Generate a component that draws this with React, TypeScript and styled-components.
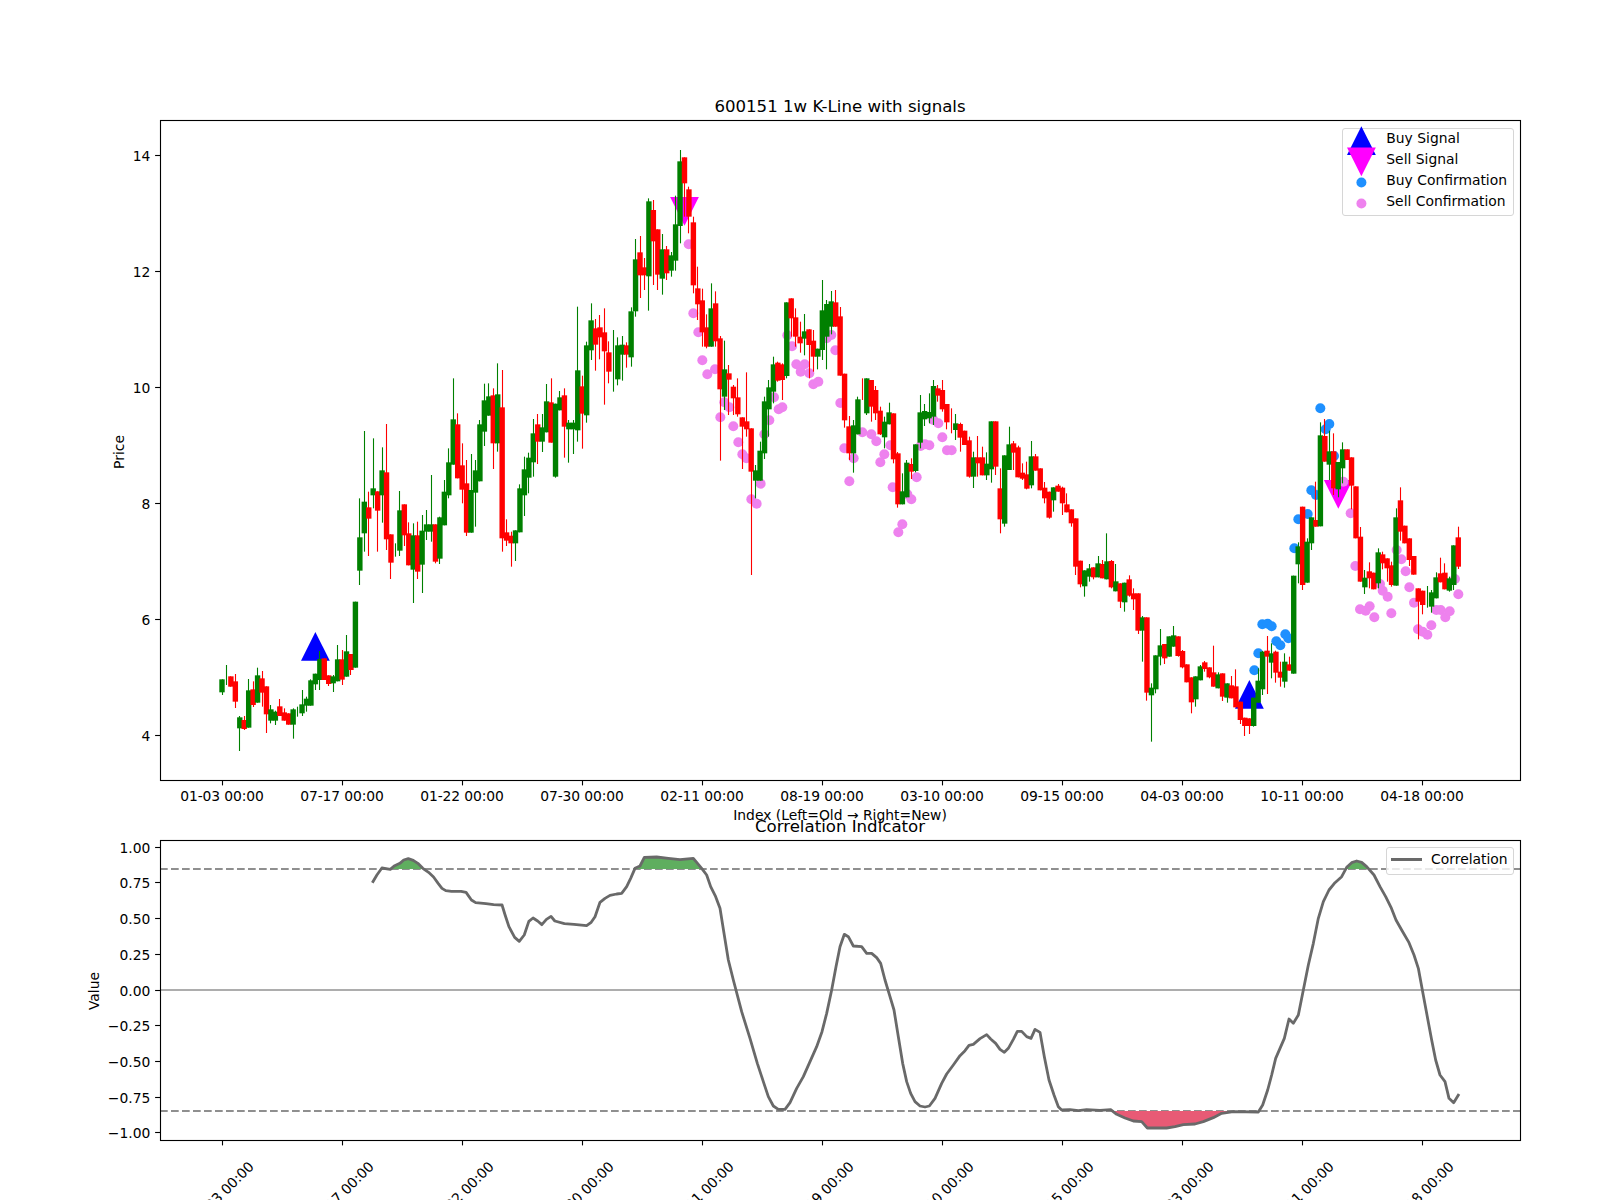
import React from "react";
import styled, { createGlobalStyle } from "styled-components";

const FONT = `"DejaVu Sans", "Liberation Sans", sans-serif`;
const CX0 = 222;
const CDX = 4.447;

// candle rows: colour, body top, body bottom, wick top, wick bottom (read from crops, with a y base)
const SEGMENTS: [number, string][] = [
  [480, `G 598 637 598 645,G 601 601 555 615,R 589 620 589 620,R 604 665 582 684,G 712 745 708 813,R 720 747 708 750,G 631 743 597 743,R 628 675 604 681,G 586 668 563 668,R 595 638 573 680,R 619 703 619 759,G 688 722 675 730,G 695 722 692 735,R 679 708 657 708,R 697 722 685 722,R 700 734 700 734,G 688 734 685 776,G 695 695 680 710,G 673 700 630 708,G 656 677 650 695,G 601 677 598 677,G 581 613 581 630,G 537 600 513 630,R 535 600 535 600,R 586 612 586 618,G 589 610 585 636,G 538 604 495 604,R 538 599 510 615,G 514 590 465 590,R 522 570 522 585,G 365 563 365 563`],
  [230, `G 922 1022 805 1065,G 815 910 603 965,R 832 866 785 978,G 775 796 625 835,R 784 842 784 965,G 721 796 652 878,R 727 928 582 960,R 913 998 913 1047,G 960 960 940 980,G 841 962 783 978,R 823 916 823 948,R 910 1006 877 1006,G 916 1019 880 1119,R 916 1025 875 1047,G 902 1004 855 1089,G 883 905 840 930,G 883 905 735 935,R 883 995 883 1000,G 862 986 860 1002,G 785 886 750 886,G 697 796 655 805,G 568 704 445 704,R 583 745 550 745,R 706 779 640 820,R 760 908 690 918,G 780 908 672 908,G 721 788 690 890,G 583 754 570 754,G 511 605 461 648,G 499 557 460 557,R 496 640 475 717,G 493 640 400 665,R 532 925 420 965,R 907 932 868 948,R 917 940 905 1010,G 901 940 901 993,G 775 907 763 907,G 718 796 680 858,G 683 743 668 790,G 610 697 567 740,R 583 635 552 702,G 592 635 552 666,G 514 607 462 607,R 517 638 445 638,G 521 740 521 743,G 502 541 483 541,R 496 590 475 683,G 578 598 570 698,G 578 598 570 672`],
  [130, `G 721 901 530 935,R 769 851 737 956,G 646 856 635 878,G 571 661 520 690,R 595 644 567 722,R 592 622 555 688,R 607 664 535 824,R 667 725 634 760,G 700 700 600 785,G 646 748 622 766,G 644 674 618 752,R 646 674 637 713,G 544 682 532 710,G 388 544 327 560,R 367 436 318 504,R 412 436 384 480,G 214 439 205 542,R 240 334 210 465,R 298 434 298 480,G 358 446 312 494,R 358 430 348 450,G 376 422 366 440,G 283 392 197 422,G 94 288 60 340,R 82 160 82 260,R 178 260 170 310,R 277 466 260 490,R 475 523 410 570,R 511 607 476 650,R 592 650 553 655,G 535 650 460 650,R 520 634 484 650,R 625 778 618 992,G 718 800 632 840,R 730 749 705 855,R 770 805 765 855,R 802 853 745 860,R 862 890 862 1017,R 874 898 727 920,R 895 1025 895 1335,G 1021 1052 1005 1105,G 962 1052 935 1052,G 814 970 800 987,G 772 838 750 920,G 703 785 680 820,R 698 752 695 755,R 703 750 700 810,G 517 738 517 745,R 505 565 505 620,R 562 620 535 650,R 620 640 575 668,G 604 626 552 676,R 598 645 598 745,R 632 680 600 725,G 656 680 656 718,G 541 660 450 690,G 522 620 510 718,G 514 590 483 613,R 517 590 480 590,R 559 737 531 737,R 731 871 731 893`],
  [380, `R 139 220 108 240,G 136 220 120 278,G 58 163 50 163,R 30 30 -5 60,G -5 100 -5 105,R 0 80 0 125,R 30 100 18 120,R 92 163 80 165,G 125 172 110 205,G 97 133 68 133,R 100 238 100 250,R 220 373 216 383,G 334 373 280 373,G 248 352 240 352,R 252 275 235 297,G 193 273 193 277,G 97 188 45 205,G 93 118 72 138,G 96 115 40 130,G 18 110 0 135,R 25 47 15 65,R 30 88 0 95,R 72 127 72 148,R 120 120 85 160,G 130 150 102 180,R 132 173 128 215,R 152 195 152 195,R 181 290 170 293,G 232 290 215 324,R 232 250 168 290,R 232 286 200 286,G 251 286 217 300,G 124 268 124 308,R 124 260 124 285,R 325 418 265 460,G 226 431 226 440,G 193 270 140 270,R 190 218 183 270,R 202 292 197 292,R 278 296 250 300,R 283 326 245 328,G 229 316 183 325,R 229 272 222 272,R 265 331 265 331,R 323 355 306 370,R 335 413 335 416,G 322 361 322 395,R 317 335 312 335,R 323 370 320 405,R 373 397 340 397,R 388 430 388 440,R 415 560 415 585,R 542 613 542 622,G 571 619 571 650,G 565 590 552 605,R 562 592 562 598,G 550 592 528 592,R 552 595 540 595,G 544 598 460 598,R 543 622 540 625,G 604 634 552 634,R 610 665 610 684,G 608 667 608 695,R 598 647 586 650,R 640 658 625 690,R 640 752 640 762,G 712 752 708 845,R 712 938 712 962,G 923 946 910 1085,G 826 928 826 940,G 796 830 747 856,R 792 835 792 852,G 769 830 769 830,G 766 800 738 800,R 769 828 769 830,R 813 862 810 865,R 853 907 853 907,R 892 967 892 1000,G 889 958 889 980,G 859 901 855 901,R 847 867 843 875,R 862 892 862 895,R 877 920 797 920,G 883 925 877 925,R 880 950 880 963,G 910 953 910 968,R 916 955 888 955,R 919 982 868 982,R 965 1020 965 1032,R 1013 1038 1013 1068,R 1015 1038 1015 1062,G 953 1038 953 1040,G 902 968 865 968,G 815 928 813 945,R 812 830 768 942,G 820 848 790 895,R 815 878 812 908,R 875 893 845 920,G 845 905 820 923,R 853 872 830 872,G 587 881 587 881,G 499 553 487 610,R 380 615 380 630,G 485 608 475 608,G 412 490 412 510,R 420 440 305 440,G 166 439 127 439,R 168 245 117 245,G 214 254 152 300,R 214 325 160 345,G 246 328 246 352,G 208 265 187 310,R 208 240 208 240,R 232 317 232 388,R 319 475 319 475,R 470 605 441 605,G 593 622 570 642,R 574 595 547 625,R 578 628 578 628,G 517 610 505 625,R 523 550 515 568,R 535 565 535 605,R 556 615 545 620,G 412 617 385 617,R 361 455 322 482,R 437 490 437 490,R 475 540 475 558,R 528 584 528 584,R 625 665 625 778,R 632 675 632 703,G 650 650 618 683,G 637 680 630 698,G 592 655 577 655,R 580 607 533 607,R 578 628 550 628,G 595 632 590 635,G 496 615 496 630,R 472 560 440 567`],
];

type Candle = { x: number; up: boolean; bt: number; bb: number; wt: number; wb: number };
const candles: Candle[] = [];
SEGMENTS.forEach(([base, rows]) => {
  rows.split(",").forEach((row) => {
    const [c, a, b, d, e] = row.split(" ");
    candles.push({
      x: CX0 + candles.length * CDX,
      up: c === "G",
      bt: base + Number(a) / 3,
      bb: base + Number(b) / 3,
      wt: base + Number(d) / 3,
      wb: base + Number(e) / 3,
    });
  });
});

type P = [number, number];
const conv = (bx: number, by: number, list: number[][], sx = 3): P[] =>
  list.map(([x, y]) => [bx + x / sx, by + y / 3]);

const pinkDots: P[] = [
  ...conv(550, 130, [[416,343],[430,550],[445,607],[457,691],[472,733],[495,718],[712,616],[726,649],[739,703],[752,725],[764,703],[778,730],[844,615],[830,625],[856,661]]),
  ...conv(700, 380, [[61,112],[73,67],[88,82],[100,139],[115,187],[127,223],[139,235],[154,358],[170,371],[182,311],[193,163],[208,121],[222,52],[236,88],[247,82],[340,13],[355,5],[421,69],[433,205],[461,235],[448,304],[487,157],[514,163],[529,184],[553,223],[541,247],[571,196],[578,322],[607,433],[595,457],[634,358],[622,343],[650,292],[662,198],[675,193],[688,196],[727,172],[741,211],[755,211],[715,130],[700,120]]),
  ...conv(1200, 380, [[430,305],[452,400],[466,558],[480,688],[497,692],[509,679],[523,712],[540,612],[548,632],[563,650],[574,700],[590,510],[604,538],[617,574],[628,622],[642,668],[654,748],[668,755],[682,764],[694,736],[709,690],[722,690],[736,712],[749,694],[765,597],[775,643]]),
];
const blueDots: P[] = conv(1200, 380, [[361,85],[388,132],[377,148],[402,228],[334,331],[348,345],[295,418],[323,402],[283,505],[187,733],[203,731],[215,739],[229,784],[241,796],[256,763],[265,775],[175,820],[163,871]]);

const corr: P[] = [
  ...conv(0, 780, [[973,308],[985,285],[998,264],[1020,268],[1030,258],[1045,250],[1055,240],[1067,236],[1080,241],[1092,250],[1105,265],[1120,277],[1133,291],[1145,310],[1155,325],[1165,332],[1180,334],[1205,334],[1218,337],[1232,360],[1243,368],[1270,371],[1290,374],[1312,375],[1320,405],[1330,440],[1345,472],[1357,484],[1370,465],[1382,424],[1393,414],[1405,423],[1416,434],[1428,418],[1440,409],[1450,423],[1475,431],[1500,433],[1533,437],[1545,427],[1555,410]], 1568 / 600),
  ...conv(600, 780, [[0,367],[15,355],[30,346],[50,342],[65,340],[80,320],[92,295],[105,265],[120,258],[133,232],[170,231],[205,235],[240,239],[280,235],[305,265],[320,285],[332,320],[347,350],[360,385],[372,460],[385,540],[400,600],[425,695],[450,775],[472,850],[490,905],[505,950],[520,978],[535,988],[555,988],[570,968],[590,925],[610,890],[630,845],[650,800],[666,755],[680,700],[695,630],[708,560],[720,500],[733,463],[745,470],[760,498],[785,500],[800,520],[815,520],[830,533],[842,550],[855,600],[870,650],[882,690],[895,770],[908,850],[920,905],[932,940],[945,965],[960,978],[975,981],[988,978],[1005,955],[1025,910],[1040,882],[1060,855],[1080,827],[1095,812],[1107,796],[1120,793],[1140,776],[1160,764],[1172,777],[1187,790],[1200,808],[1213,817],[1225,805],[1240,778],[1252,754],[1265,754],[1280,770],[1293,775],[1305,748],[1320,757],[1333,830],[1347,900],[1362,945],[1375,980],[1385,990],[1410,989],[1435,992],[1460,989]]),
  ...conv(1100, 780, [[0,991],[32,989],[50,1003],[75,1014],[100,1023],[125,1025],[142,1044],[200,1044],[225,1040],[250,1034],[285,1032],[310,1025],[340,1013],[365,1000],[400,995],[475,996],[488,975],[503,930],[515,885],[527,835],[540,805],[553,775],[567,717],[580,730],[595,705],[610,630],[625,555],[640,490],[655,415],[670,365],[687,330],[705,308],[725,290],[740,262],[755,248],[770,243],[785,247],[800,260],[822,285],[840,320],[857,350],[873,382],[888,420],[905,450],[927,488],[942,525],[955,565],[967,630],[980,700],[995,780],[1007,840],[1020,885],[1035,905],[1047,955],[1061,968],[1077,942]]),
];

const Y_HI = 869;
const Y_LO = 1111;

// areas of the line beyond a threshold, closed along the threshold
function beyond(pts: P[], level: number, above: boolean): string[] {
  const out: string[] = [];
  let cur: P[] = [];
  const isIn = (y: number) => (above ? y < level : y > level);
  pts.forEach((p, i) => {
    const prev = pts[i - 1];
    if (prev && isIn(prev[1]) !== isIn(p[1])) {
      const t = (level - prev[1]) / (p[1] - prev[1]);
      const cross: P = [prev[0] + t * (p[0] - prev[0]), level];
      if (isIn(p[1])) {
        cur = [cross];
      } else {
        cur.push(cross);
        out.push(cur.map((q) => q.join(",")).join(" "));
        cur = [];
      }
    }
    if (isIn(p[1])) cur.push(p);
  });
  return out;
}

const snap = (v: number) => Math.floor(v) + 0.5;
const TICK_LABELS = ["01-03", "07-17", "01-22", "07-30", "02-11", "08-19", "03-10", "09-15", "04-03", "10-11", "04-18"];
const tickX = (k: number) => snap(222.2 + 120.07 * k);
const priceY = (p: number) => snap(735.3 - (p - 4) * 58);
const valueY = (v: number) => snap(990 - 142.8 * v);
const VALUE_TICKS = ["1.00", "0.75", "0.50", "0.25", "0.00", "−0.25", "−0.50", "−0.75", "−1.00"];

const triangleUp = (cx: number, top: number) =>
  `${cx},${top} ${cx + 14.4},${top + 28.8} ${cx - 14.4},${top + 28.8}`;
const triangleDown = (cx: number, top: number) =>
  `${cx - 14.4},${top} ${cx + 14.4},${top} ${cx},${top + 28.8}`;

const GlobalStyle = createGlobalStyle`
  html, body { margin: 0; padding: 0; background: #fff; overflow: hidden; }
`;

const Figure = styled.div`
  width: 1600px;
  height: 1200px;
  box-sizing: border-box;
  padding: 0 80px 0 160px;
  display: flex;
  flex-direction: column;
  overflow: hidden;
  background: #fff;
  color: #000;
  font-family: ${FONT};
`;

const TitleBar = styled.div<{ $height: number }>`
  height: ${(p) => p.$height}px;
  flex: none;
  display: flex;
  align-items: flex-end;
  justify-content: center;
  position: relative;
  z-index: 1;
`;

const Title = styled.h2`
  margin: 0 0 3px;
  font-size: 16.6px;
  font-weight: 400;
  line-height: 20px;
`;

const Axes = styled.div<{ $height: number }>`
  position: relative;
  flex: none;
  width: 1360px;
  height: ${(p) => p.$height}px;
`;

const Plot = styled.svg`
  display: block;
  overflow: visible;
`;

const Spines = styled.rect`
  fill: none;
  stroke: #000;
  stroke-width: 1.11px;
`;

const Tick = styled.line`
  stroke: #000;
  stroke-width: 1.11px;
`;

const Label = styled.text<{ $anchor?: string }>`
  font-family: ${FONT};
  font-size: 13.89px;
  fill: #000;
  text-anchor: ${(p) => p.$anchor ?? "middle"};
`;

const DateLabel = styled(Label)`
  letter-spacing: -0.1px;
`;

const Wick = styled.line<{ $up: boolean }>`
  stroke: ${(p) => (p.$up ? "#008000" : "#ff0000")};
  stroke-width: 1.1px;
`;

const Body = styled.rect<{ $up: boolean }>`
  fill: ${(p) => (p.$up ? "#008000" : "#ff0000")};
`;

const Dot = styled.circle<{ $buy: boolean }>`
  fill: ${(p) => (p.$buy ? "#1e90ff" : "#ee82ee")};
`;

const Marker = styled.polygon<{ $buy: boolean }>`
  fill: ${(p) => (p.$buy ? "#0000ff" : "#ff00ff")};
`;

const ZeroLine = styled.line`
  stroke: #adadad;
  stroke-width: 2.1px;
`;

const Threshold = styled.line`
  stroke: #8f8f8f;
  stroke-width: 2.1px;
  stroke-dasharray: 7.7 3.3;
`;

const Area = styled.polygon<{ $high: boolean }>`
  fill: ${(p) => (p.$high ? "#5fae5f" : "#e85a75")};
`;

const CorrLine = styled.polyline`
  fill: none;
  stroke: #696969;
  stroke-width: 2.8px;
  stroke-linejoin: round;
`;

const Legend = styled.div<{ $width: number; $top: number }>`
  position: absolute;
  top: ${(p) => p.$top}px;
  right: 6.3px;
  width: ${(p) => p.$width}px;
  box-sizing: border-box;
  padding: 1.1px 0 1px 4.6px;
  background: rgba(255, 255, 255, 0.8);
  border: 1px solid #d6d6d6;
  border-radius: 3px;
`;

const LegendRow = styled.div`
  display: flex;
  align-items: center;
  height: 21px;
  gap: 10px;
  font-size: 13.89px;
`;

const LegendText = styled.span`
  position: relative;
  top: -2px;
  white-space: nowrap;
`;

const LegendIcon = styled.svg`
  flex: none;
  overflow: visible;
`;

const LegendStroke = styled.span`
  flex: none;
  width: 30.7px;
  height: 3px;
  background: #696969;
  margin-right: -0.5px;
`;

const LegendRowThin = styled(LegendRow)`
  box-sizing: border-box;
  height: 23.4px;
  padding-bottom: 4px;
  margin-left: -1px;
`;

const LegendTextPlain = styled.span`
  white-space: nowrap;
`;

export default function App() {
  return (
    <Figure>
      <GlobalStyle />
      <TitleBar $height={120}>
        <Title>600151 1w K-Line with signals</Title>
      </TitleBar>
      <Axes $height={660}>
        <Plot width={1360} height={660} viewBox="160 120 1360 660">
          <Marker $buy points={triangleUp(315.4, 632)} />
          <Marker $buy points={triangleUp(1249.4, 680)} />
          <Marker $buy={false} points={triangleDown(684.5, 197)} />
          <Marker $buy={false} points={triangleDown(1338.3, 480)} />
          {blueDots.map(([x, y], i) => (
            <Dot key={i} $buy cx={x} cy={y} r={5} />
          ))}
          {pinkDots.map(([x, y], i) => (
            <Dot key={i} $buy={false} cx={x} cy={y} r={5} />
          ))}
          {candles.map((c, i) => (
            <g key={i}>
              <Wick $up={c.up} x1={snap(c.x)} x2={snap(c.x)} y1={c.wt} y2={c.wb} />
              {c.bb > c.bt && <Body $up={c.up} x={c.x - 2.7} y={c.bt} width={5.4} height={c.bb - c.bt} />}
            </g>
          ))}
          <Spines x={160.5} y={120.5} width={1360} height={660} />
          {[4, 6, 8, 10, 12, 14].map((p) => (
            <g key={p}>
              <Tick x1={155.1} x2={160} y1={priceY(p)} y2={priceY(p)} />
              <Label $anchor="end" x={150.3} y={priceY(p) + 5}>
                {p}
              </Label>
            </g>
          ))}
          {TICK_LABELS.map((t, k) => (
            <g key={t}>
              <Tick x1={tickX(k)} x2={tickX(k)} y1={780} y2={785.4} />
              <DateLabel x={tickX(k) - 0.5} y={800.6}>
                {t} 00:00
              </DateLabel>
            </g>
          ))}
          <Label transform="translate(124 452) rotate(-90)">Price</Label>
          <Label x={840} y={820}>
            Index (Left=Old → Right=New)
          </Label>
        </Plot>
        <Legend $width={172} $top={7.7}>
          <LegendRow>
            <LegendIcon width={29} height={21} viewBox="0 0 29 21">
              <Marker $buy points={triangleUp(14.4, -3.8)} />
            </LegendIcon>
            <LegendText>Buy Signal</LegendText>
          </LegendRow>
          <LegendRow>
            <LegendIcon width={29} height={21} viewBox="0 0 29 21">
              <Marker $buy={false} points={triangleDown(14.4, -3.5)} />
            </LegendIcon>
            <LegendText>Sell Signal</LegendText>
          </LegendRow>
          <LegendRow>
            <LegendIcon width={29} height={21} viewBox="0 0 29 21">
              <Dot $buy cx={14.4} cy={10.5} r={5} />
            </LegendIcon>
            <LegendText>Buy Confirmation</LegendText>
          </LegendRow>
          <LegendRow>
            <LegendIcon width={29} height={21} viewBox="0 0 29 21">
              <Dot $buy={false} cx={14.4} cy={10.5} r={5} />
            </LegendIcon>
            <LegendText>Sell Confirmation</LegendText>
          </LegendRow>
        </Legend>
      </Axes>
      <TitleBar $height={60}>
        <Title>Correlation Indicator</Title>
      </TitleBar>
      <Axes $height={300}>
        <Plot width={1360} height={300} viewBox="160 840 1360 300">
          <ZeroLine x1={160} x2={1520} y1={990} y2={990} />
          <Threshold x1={160} x2={1520} y1={Y_HI} y2={Y_HI} />
          <Threshold x1={160} x2={1520} y1={Y_LO} y2={Y_LO} />
          {beyond(corr, Y_HI, true).map((pts) => (
            <Area key={pts} $high points={pts} />
          ))}
          {beyond(corr, Y_LO, false).map((pts) => (
            <Area key={pts} $high={false} points={pts} />
          ))}
          <CorrLine points={corr.map((p) => p.join(",")).join(" ")} />
          <Spines x={160.5} y={840.5} width={1360} height={300} />
          {VALUE_TICKS.map((t) => {
            const y = valueY(Number(t.replace("−", "-")));
            return (
              <g key={t}>
                <Tick x1={155.1} x2={160} y1={y} y2={y} />
                <Label $anchor="end" x={150.3} y={y + 5}>
                  {t}
                </Label>
              </g>
            );
          })}
          {TICK_LABELS.map((t, k) => (
            <g key={t}>
              <Tick x1={tickX(k)} x2={tickX(k)} y1={1140} y2={1145.4} />
              <DateLabel dominantBaseline="central" transform={`translate(${tickX(k) - 1} 1193.5) rotate(-45)`}>
                {t} 00:00
              </DateLabel>
            </g>
          ))}
          <Label transform="translate(98.5 991) rotate(-90)">Value</Label>
        </Plot>
        <Legend $width={127.4} $top={7.3}>
          <LegendRowThin>
            <LegendStroke />
            <LegendTextPlain>Correlation</LegendTextPlain>
          </LegendRowThin>
        </Legend>
      </Axes>
    </Figure>
  );
}
